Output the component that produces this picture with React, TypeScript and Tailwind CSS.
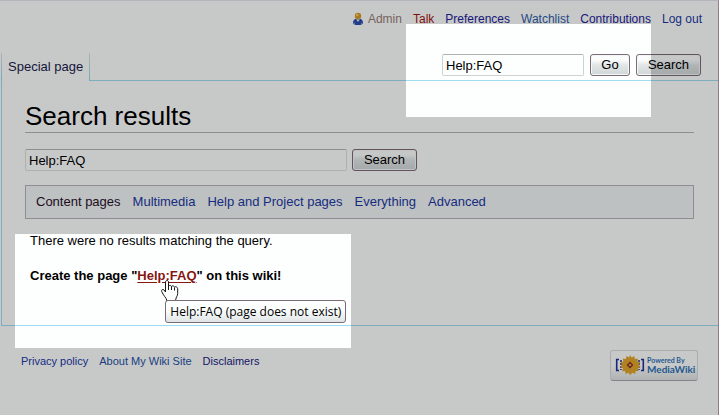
import { useState } from 'react';

const userLinks = [
  { label: 'Talk', color: 'text-[#a31414]' },
  { label: 'Preferences', color: 'text-[#1c2299]' },
  { label: 'Watchlist', color: 'text-[#2f5caa]' },
  { label: 'Contributions', color: 'text-[#1c2299]' },
  { label: 'Log out', color: 'text-[#1a38a4]' },
];

const profiles = ['Content pages', 'Multimedia', 'Help and Project pages', 'Everything', 'Advanced'];

const footerLinks = [
  { label: 'Privacy policy', color: 'text-[#1a38a4]' },
  { label: 'About My Wiki Site', color: 'text-[#2450a4]' },
  { label: 'Disclaimers', color: 'text-[#181c80]' },
];

const buttonClass =
  'h-[22px] rounded-[3px] border border-[#7b6b76] bg-linear-to-b from-[#fbfdfd] from-25% via-[#e2e6e6] via-50% to-[#d0d6d6] text-[13px] leading-5 text-black shadow-[inset_0_0_0_1px_#f6f8f8]';

function UserIcon() {
  return (
    <svg width="12" height="14" viewBox="0 0 12 14" aria-hidden="true">
      <path d="M1 10.5C1 8 2.8 6.4 6 6.4S11 8 11 10.5C11 12.4 9 13 6 13S1 12.4 1 10.5Z" fill="#2b4ba8" />
      <path d="M4 7.2 6 10l2-2.8Z" fill="#dfe6f4" />
      <path d="M2.6 10.5v1.6M9.4 10.5v1.6" stroke="#7d9be0" />
      <circle cx="6" cy="4" r="3.2" fill="#d79a2a" />
      <circle cx="5.2" cy="3" r="1.3" fill="#f3cf72" />
    </svg>
  );
}

function HandCursor() {
  return (
    <svg width="18" height="22" viewBox="0 0 18 22" aria-hidden="true">
      <path
        d="M4.500 2c0-2 3-2 3 0v4.500c0-1.500 3-1.300 3 .2 0-1.300 3-1.100 3 .7 0-1.200 3.200-.8 3.200 1.300v4.800c0 2.500-2 4-2 6.500v2h-9v-2c0-1.500-3.700-5-5-8.500-.6-2 1.300-2.800 2.300-1.500l1.500 2Z"
        fill="#fdffff"
        stroke="#1a1518"
        strokeLinejoin="round"
      />
      <path d="M7.500 6v4M10.500 7v3M13.500 8v2.500" stroke="#1a1518" />
    </svg>
  );
}

function Sunflower() {
  return (
    <svg width="30" height="22" viewBox="0 0 30 22" aria-hidden="true">
      <path d="M4 5.500H1.700v11H4M26 5.500h2.300v11H26" fill="none" stroke="#20309c" strokeWidth="1.600" />
      <path d="M6 6v10M24 6v10" stroke="#20309c" strokeWidth="1.500" strokeDasharray="2 1" />
      <path
        d="m15 1 1.700 2.500L19.300 2l.6 2.900 3-.5-.4 3 2.800.9-1.600 2.500 1.900 2.300-2.700 1.200.7 2.900-2.900-.1-.5 2.900-2.700-1.200L15 21l-1.700-2.200-2.700 1.200-.5-2.900-2.900.1.7-2.900-2.700-1.200 1.900-2.300-1.600-2.500 2.800-.9-.4-3 3 .5.6-2.900 2.600 1.500Z"
        fill="#e0a52c"
      />
      <path d="m15 8.500 2.500 2.500-2.500 2.500-2.500-2.500Z" fill="#d9a25c" stroke="#8c3024" strokeWidth="1.300" />
    </svg>
  );
}

export default function App() {
  const [quickQuery, setQuickQuery] = useState('Help:FAQ');
  const [query, setQuery] = useState('Help:FAQ');

  return (
    <div className="relative min-h-screen overflow-hidden border-t border-r border-t-[#b4b4ba] border-r-[#907f88] bg-[#fdffff] pl-px font-['Liberation_Sans',Arial,sans-serif] text-[13px] leading-4 text-black">
      {/* Personal tools */}
      <nav className="flex h-[52px] items-start justify-end gap-[11px] pt-[10px] pr-4 text-[12px]">
        <a href="#admin" className="flex items-center gap-1 text-[#967d78]">
          <UserIcon />
          Admin
        </a>
        {userLinks.map((link) => (
          <a key={link.label} href="#" className={link.color}>
            {link.label}
          </a>
        ))}
      </nav>

      {/* Tab and quick search */}
      <div className="flex h-7">
        <div className="flex">
          <span className="w-px bg-linear-to-b from-[#dde3e3] to-[#8fd6ee]" />
          <a href="#special" className="px-[6px] pt-[6px] text-[#1c1c4c]">
            Special page
          </a>
          <span className="w-px bg-linear-to-b from-[#dde3e3] to-[#8fd6ee]" />
        </div>
        <form
          className="flex flex-1 items-start justify-end gap-[6px] border-b border-[#9fdcf2] pt-px pr-[17px]"
          onSubmit={(e) => e.preventDefault()}
        >
          <input
            aria-label="Search the wiki"
            value={quickQuery}
            onChange={(e) => setQuickQuery(e.target.value)}
            className="h-[22px] w-[142px] rounded-[2px] border border-[#d0d2d2] border-t-[#b0b0b4] px-[3px]"
          />
          <button className={`${buttonClass} w-10`}>Go</button>
          <button className={`${buttonClass} w-[65px]`}>Search</button>
        </form>
      </div>

      {/* Page body */}
      <main className="h-[245px] border-b border-l border-[#9fdcf2] pr-6 pl-[23px]">
        <h1 className="border-b border-[#b4b4ba] pt-[19px] text-[26px] leading-8">Search results</h1>

        <form className="mt-4 flex gap-[5px]" onSubmit={(e) => e.preventDefault()}>
          <input
            aria-label="Search query"
            value={query}
            onChange={(e) => setQuery(e.target.value)}
            className="h-[22px] w-[322px] rounded-[2px] border border-[#dcdede] border-t-[#b4b4ba] px-[3px]"
          />
          <button className={`${buttonClass} w-[65px]`}>Search</button>
        </form>

        <div className="mt-[14px] flex h-[34px] items-center gap-3 border border-[#b4b4ba] bg-[#f2f5f5] px-[10px]">
          {profiles.map((profile, i) => (
            <a key={profile} href="#" className={i === 0 ? 'text-[#26102c]' : 'text-[#1a38a4]'}>
              {profile}
            </a>
          ))}
        </div>

        <div className="pt-[14px] pl-[5px]">
          <p>There were no results matching the query.</p>
          <p className="mt-[19px] font-bold">
            Create the page "
            <span className="relative">
              <a href="#create" className="text-[#861612] underline underline-offset-2" aria-describedby="tip">
                Help:FAQ
              </a>
              <span className="absolute top-3 left-6">
                <HandCursor />
              </span>
              <span
                id="tip"
                role="tooltip"
                className="absolute top-8 left-7 h-[23px] rounded-[3px] border border-[#7b6b76] bg-linear-to-b from-[#fdffff] from-40% to-[#e0e4e4] px-1 font-['Open_Sans','Noto_Sans',sans-serif] text-[12px] leading-[21px] font-normal whitespace-nowrap"
              >
                Help:FAQ (page does not exist)
              </span>
            </span>
            " on this wiki!
          </p>
        </div>
      </main>

      {/* Footer */}
      <footer className="flex items-start justify-between pt-6 pr-5 pl-5">
        <div className="flex gap-[11px] pt-[3px] text-[11px]">
          {footerLinks.map((link) => (
            <a key={link.label} href="#" className={link.color}>
              {link.label}
            </a>
          ))}
        </div>
        <a
          href="#mediawiki"
          className="flex h-[31px] w-[88px] items-center rounded-[3px] border border-[#d8dcdc] border-b-[#a8a8b0] bg-linear-to-b from-[#fdffff] from-50% to-[#dfe3e3] pb-[2px] pl-1 font-[Lato,sans-serif] text-[#2f72b4]"
        >
          <Sunflower />
          <span className="flex flex-col pl-[2px]">
            <span className="text-[7px] leading-[8px] font-bold">Powered By</span>
            <span className="text-[10px] leading-[10px] font-bold">MediaWiki</span>
          </span>
        </a>
      </footer>

      {/* Dimmed layer with two highlighted openings */}
      <div className="pointer-events-none absolute inset-0 bg-black/21 [clip-path:polygon(evenodd,0_0,100%_0,100%_100%,0_100%,0_0,406px_23px,651px_23px,651px_116px,406px_116px,406px_23px,0_0,15px_233px,351px_233px,351px_347px,15px_347px,15px_233px,0_0)]" />
    </div>
  );
}
